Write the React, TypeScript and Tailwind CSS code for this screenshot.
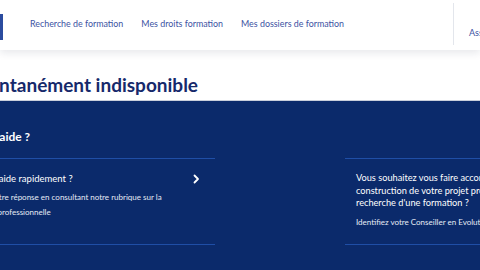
import React from "react";

function Chevron() {
  return (
    <svg width="7" height="10" viewBox="0 0 7 10" fill="none">
      <path d="M1.5 1.5 L5 5 L1.5 8.5" stroke="white" strokeWidth="1.8" strokeLinecap="round" strokeLinejoin="round" />
    </svg>
  );
}

export default function App() {
  return (
    <div className="w-[480px] h-[270px] overflow-hidden bg-white relative font-[Lato,sans-serif]">
      <header className="relative z-10 h-[50px] bg-white shadow-[0_3px_8px_rgba(20,30,60,0.10)] flex items-start">
        <div className="w-[3px] h-[26px] mt-[14px] bg-[#2b4c9f] shrink-0" />
        <nav className="flex items-center gap-[18px] ml-[27px] mt-[17px] text-[8.9px] text-[#3c52a2] whitespace-nowrap">
          <span>Recherche de formation</span>
          <span>Mes droits formation</span>
          <span>Mes dossiers de formation</span>
        </nav>
        <div className="ml-auto w-[27px] shrink-0 flex items-start h-full">
          <div className="w-px h-[42px] mt-[3px] bg-[#e3e6ec] shrink-0" />
          <span className="ml-[15px] mt-[26px] text-[9px] text-[#3c52a2] whitespace-nowrap">Assistance</span>
        </div>
      </header>

      <div className="h-[51px] border-b border-[#c9cfdb] flex items-start">
        <h1 className="ml-[-120px] mt-[23px] text-[19px] leading-[24px] font-bold text-[#16296b] whitespace-nowrap">
          Service momentanément indisponible
        </h1>
      </div>

      <section className="bg-[#0b2a6b] h-[170px] text-white">
        <h2 className="ml-[-49px] pt-[29px] text-[12px] leading-[14px] font-bold whitespace-nowrap">Besoin d'aide ?</h2>
        <div className="flex ml-[-56px] mt-[14px] gap-[130px]">
          <div className="w-[271px] h-[87px] shrink-0 border-y border-[#1f4ea6] pl-[17px] pr-[15px] pt-[13px]">
            <div className="flex items-center justify-between">
              <span className="text-[9.5px] leading-[13px] whitespace-nowrap">Besoin d'aide rapidement ?</span>
              <Chevron />
            </div>
            <p className="mt-[5px] text-[8px] leading-[15px] text-[#e6ebf5] whitespace-nowrap">
              Trouvez votre réponse en consultant notre rubrique sur la
              <br />
              formation professionnelle
            </p>
          </div>
          <div className="w-[271px] h-[87px] shrink-0 border-y border-[#1f4ea6] pl-[11px] pt-[13px]">
            <p className="text-[9.2px] leading-[12.5px] whitespace-nowrap">
              Vous souhaitez vous faire accompagner dans la
              <br />
              construction de votre projet professionnel ou dans la
              <br />
              recherche d'une formation ?
            </p>
            <p className="mt-[5px] text-[8px] leading-[15px] text-[#e6ebf5] whitespace-nowrap">
              Identifiez votre Conseiller en Evolution Professionnelle
            </p>
          </div>
        </div>
      </section>
    </div>
  );
}
